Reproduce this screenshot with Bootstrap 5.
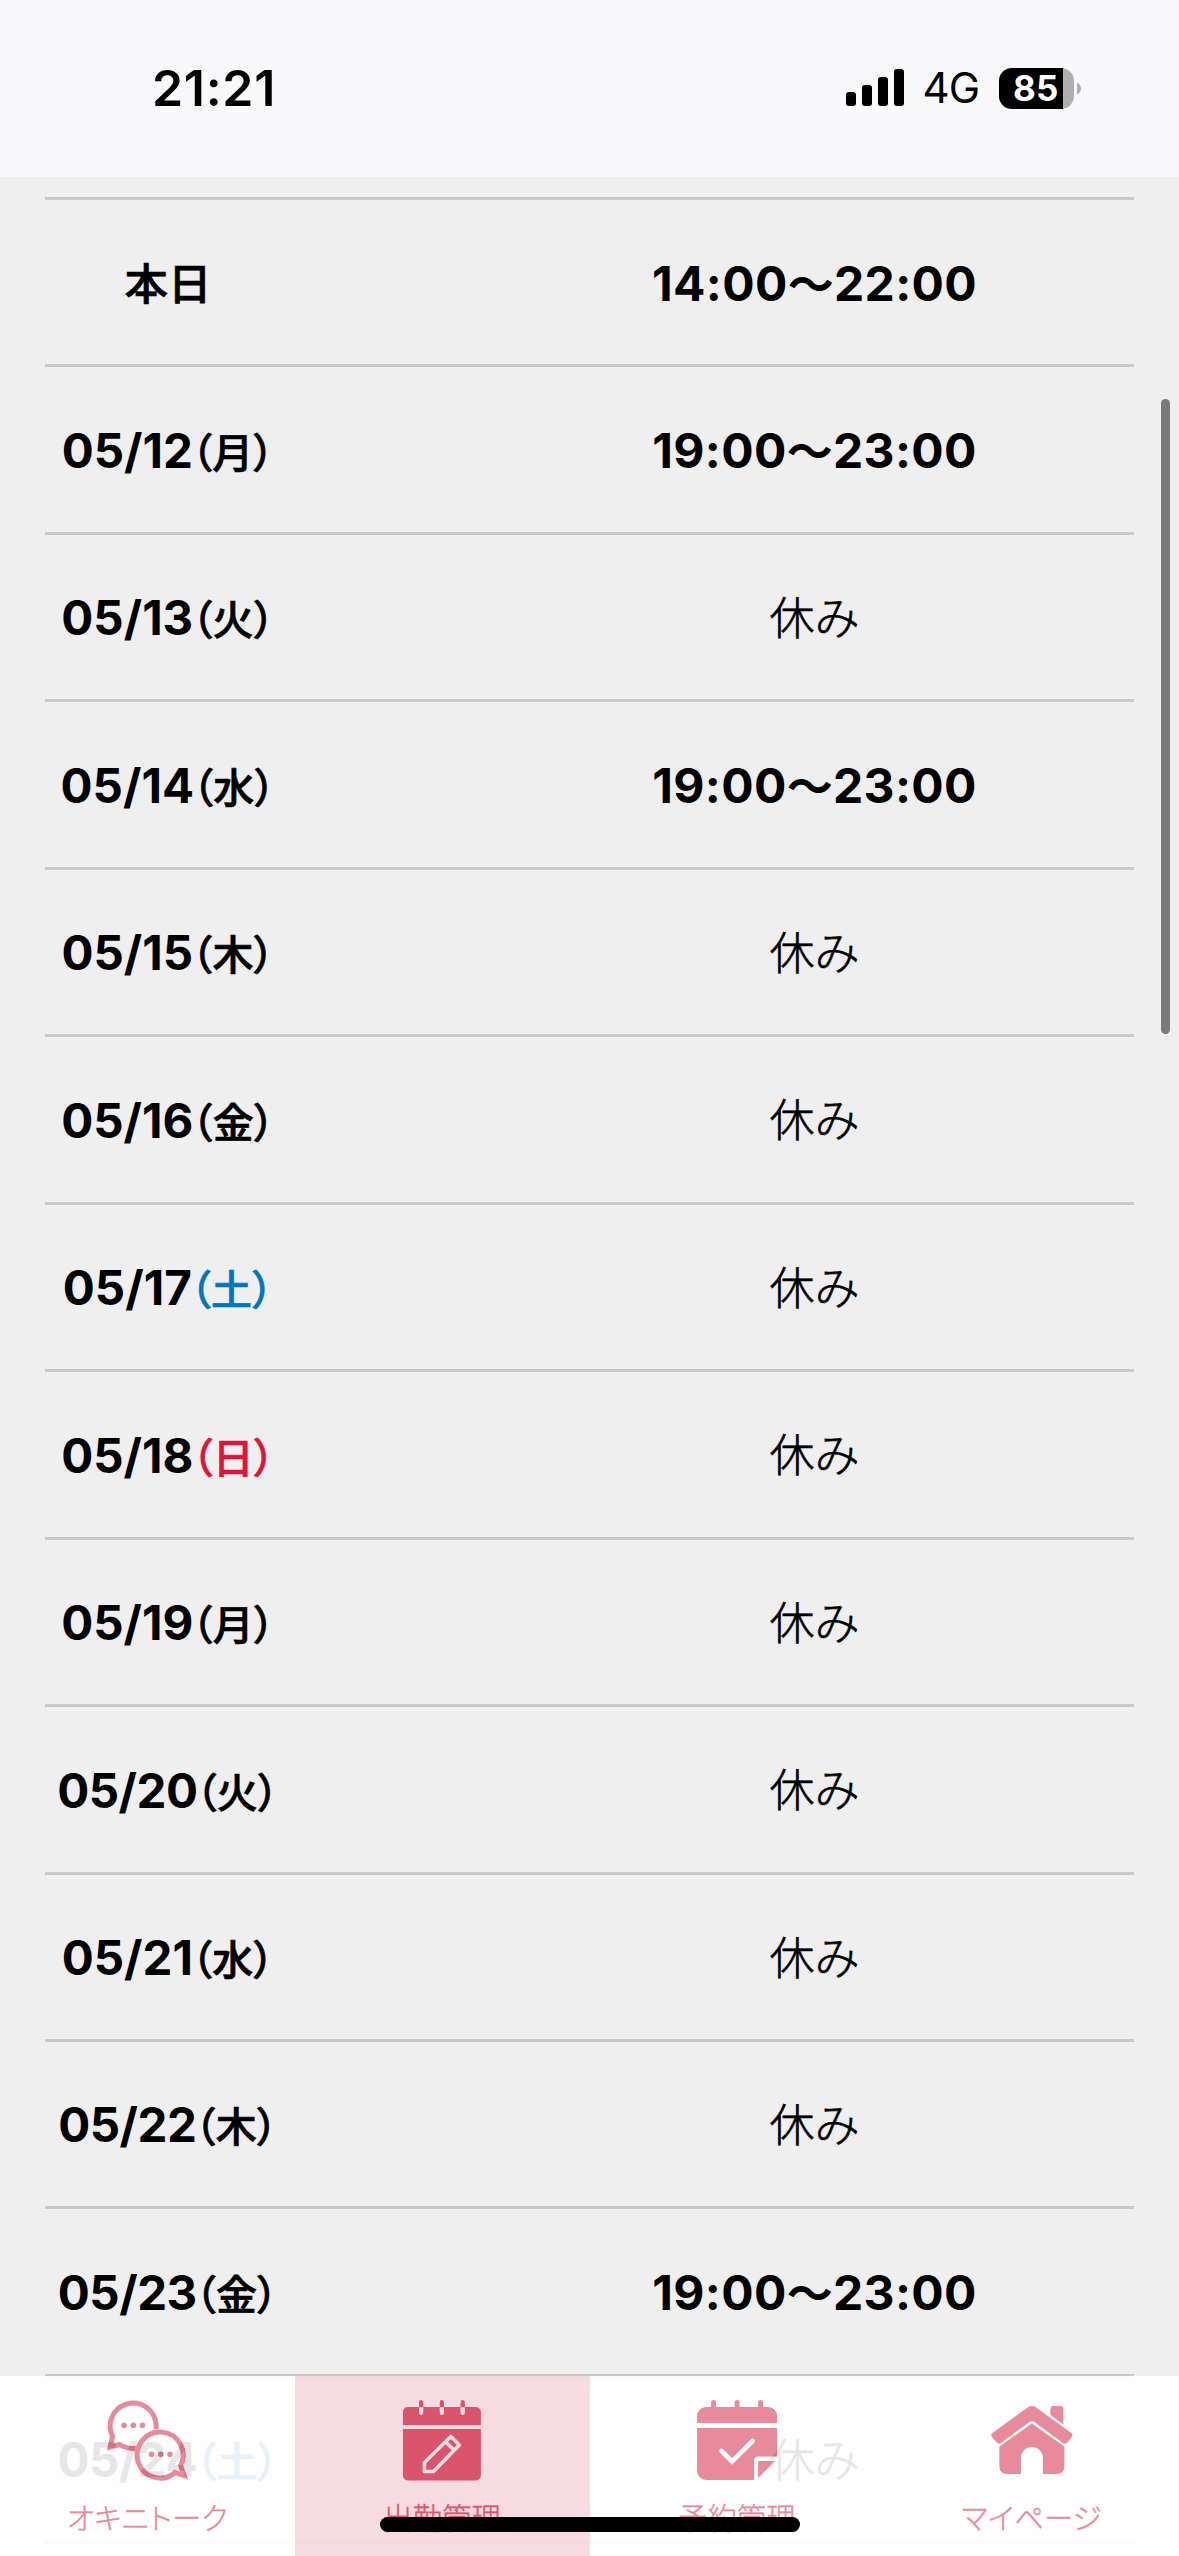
<!DOCTYPE html>
<html lang="ja">
<head>
<meta charset="utf-8">
<meta name="viewport" content="width=device-width, initial-scale=1">
<title>出勤管理</title>
<link href="https://cdn.jsdelivr.net/npm/bootstrap@5.3.0/dist/css/bootstrap.min.css" rel="stylesheet">
<style>
html,body{height:2556px;overflow:hidden}
body{background:#efefef;color:#000;font-family:Inter,"Noto Sans CJK JP",sans-serif;line-height:1}
.statusbar{height:177px;background:#f9f9fc;padding:0 98px 0 152px}
.statusbar>div{height:176px}
.clock{font-size:50px;font-weight:600;letter-spacing:.7px}
.carrier{font-size:42px;letter-spacing:-1px;margin:0 20px 0 18px}
.battery{width:82px;height:41px}
.battery-num{left:14px;top:3px;font-size:35px;font-weight:700;color:#fff;letter-spacing:.2px}
.schedule{height:2359px;padding:0 45px;margin-top:20px}
.shift{height:167.46px;border-top:3px solid #c9c9c9;white-space:nowrap}
.shift-day{width:240px;padding:2px 0 0 6px;font-size:47.5px;font-weight:700}
.shift-day.twenties{letter-spacing:-.5px}
.shift-time{width:641px;padding:1px 0 0 2px;font-size:48px;font-weight:700;letter-spacing:.35px}
.wday{font-family:"Noto Sans CJK JP",sans-serif;font-size:41px;font-weight:500;font-feature-settings:"palt";letter-spacing:.3px;margin-left:-1.5px;-webkit-text-stroke:.7px currentColor}
.today{font-family:"Noto Sans CJK JP",sans-serif;font-size:43.5px;font-weight:500;-webkit-text-stroke:.7px currentColor}
.off{font-family:"Noto Sans CJK JP",sans-serif;font-size:45px;font-weight:300;letter-spacing:0;-webkit-text-stroke:.6px currentColor}
.wave{font-family:"Noto Sans CJK JP",sans-serif;font-size:46px}
.sat{color:#0076be}.sun{color:#df133b}
.last-rule{height:3px;background:#c9c9c9}
.scroll-thumb{right:9px;top:399px;width:9px;height:635px;background:#7a7a7a}
.tabs{height:180px;opacity:.9;background:#fff}
.tab{padding-top:22px;color:#e67f93}
.tab.active{background:#f7d9de;color:#d94360}
.tab svg{width:84px;height:84px;flex:none}
.tab-label{font-family:"Noto Sans CJK JP",sans-serif;font-size:29.3px;font-weight:300;line-height:30px;margin-top:19px;white-space:nowrap;-webkit-text-stroke:.4px currentColor}
.kana{font-feature-settings:"palt";letter-spacing:.3px}
.home-bar{left:380px;bottom:24px;width:420px;height:15px;background:#000;z-index:1040}
</style>
</head>
<body>
<header class="statusbar">
  <div class="d-flex align-items-center justify-content-between">
    <span class="clock">21:21</span>
    <div class="d-flex align-items-center">
      <svg width="59" height="38" viewBox="0 0 59 38"><rect x="0" y="23" width="10" height="14" rx="3"/><rect x="16" y="16" width="10" height="21" rx="3"/><rect x="32" y="8" width="10" height="29" rx="3"/><rect x="48" y="0" width="10" height="37" rx="3"/></svg>
      <span class="carrier">4G</span>
      <div class="battery position-relative">
        <svg class="d-block" width="82" height="41" viewBox="0 0 82 41"><rect width="75" height="41" rx="13" fill="#afafb1"/><path d="M13 0H64V41H13A13 13 0 0 1 0 28V13A13 13 0 0 1 13 0Z"/><path d="M78 14.500q4 2 4 6t-4 6z" fill="#afafb1"/></svg>
        <span class="battery-num position-absolute">85</span>
      </div>
    </div>
  </div>
</header>

<main class="schedule overflow-hidden">
  <div class="shift d-flex align-items-center justify-content-between"><div class="shift-day text-center"><span class="today">本日</span></div><div class="shift-time text-center">14:00<span class="wave">〜</span>22:00</div></div>
  <div class="shift d-flex align-items-center justify-content-between"><div class="shift-day text-center">05/12<span class="wday">（月）</span></div><div class="shift-time text-center">19:00<span class="wave">〜</span>23:00</div></div>
  <div class="shift d-flex align-items-center justify-content-between"><div class="shift-day text-center">05/13<span class="wday">（火）</span></div><div class="shift-time text-center"><span class="off">休み</span></div></div>
  <div class="shift d-flex align-items-center justify-content-between"><div class="shift-day text-center">05/14<span class="wday">（水）</span></div><div class="shift-time text-center">19:00<span class="wave">〜</span>23:00</div></div>
  <div class="shift d-flex align-items-center justify-content-between"><div class="shift-day text-center">05/15<span class="wday">（木）</span></div><div class="shift-time text-center"><span class="off">休み</span></div></div>
  <div class="shift d-flex align-items-center justify-content-between"><div class="shift-day text-center">05/16<span class="wday">（金）</span></div><div class="shift-time text-center"><span class="off">休み</span></div></div>
  <div class="shift d-flex align-items-center justify-content-between"><div class="shift-day text-center">05/17<span class="wday sat">（土）</span></div><div class="shift-time text-center"><span class="off">休み</span></div></div>
  <div class="shift d-flex align-items-center justify-content-between"><div class="shift-day text-center">05/18<span class="wday sun">（日）</span></div><div class="shift-time text-center"><span class="off">休み</span></div></div>
  <div class="shift d-flex align-items-center justify-content-between"><div class="shift-day text-center">05/19<span class="wday">（月）</span></div><div class="shift-time text-center"><span class="off">休み</span></div></div>
  <div class="shift d-flex align-items-center justify-content-between"><div class="shift-day twenties text-center">05/20<span class="wday">（火）</span></div><div class="shift-time text-center"><span class="off">休み</span></div></div>
  <div class="shift d-flex align-items-center justify-content-between"><div class="shift-day text-center">05/21<span class="wday">（水）</span></div><div class="shift-time text-center"><span class="off">休み</span></div></div>
  <div class="shift d-flex align-items-center justify-content-between"><div class="shift-day twenties text-center">05/22<span class="wday">（木）</span></div><div class="shift-time text-center"><span class="off">休み</span></div></div>
  <div class="shift d-flex align-items-center justify-content-between"><div class="shift-day twenties text-center">05/23<span class="wday">（金）</span></div><div class="shift-time text-center">19:00<span class="wave">〜</span>23:00</div></div>
  <div class="shift d-flex align-items-center justify-content-between"><div class="shift-day twenties text-center">05/24<span class="wday sat">（土）</span></div><div class="shift-time text-center"><span class="off">休み</span></div></div>
  <div class="last-rule"></div>
</main>

<div class="scroll-thumb position-fixed rounded-pill"></div>

<nav class="tabs fixed-bottom d-flex">
  <div class="tab col-3 d-flex flex-column align-items-center">
    <svg viewBox="105.4 2398 84 84" fill="none" stroke="currentColor" stroke-width="5">
      <path d="M156.500 2429V2425A23 23 0 1 0 113 2436.500L110.500 2447L120 2444.500Q127 2449 137 2448.500"/>
      <path d="M181 2465.500A23 23 0 1 0 175.500 2472.500L184.500 2475.500Z"/>
      <g fill="currentColor" stroke="none"><circle cx="124.500" cy="2425.300" r="2.800"/><circle cx="133.700" cy="2425.300" r="2.800"/><circle cx="142.900" cy="2425.300" r="2.800"/><circle cx="152" cy="2454.300" r="2.800"/><circle cx="161.200" cy="2454.300" r="2.800"/><circle cx="170.400" cy="2454.300" r="2.800"/></g>
    </svg>
    <span class="tab-label kana">オキニトーク</span>
  </div>
  <div class="tab active col-3 d-flex flex-column align-items-center">
    <svg viewBox="400.100 2398 84 84" fill="currentColor">
      <path d="M403 2425V2412a5 5 0 0 1 5-5H476a5 5 0 0 1 5 5V2425ZM403 2429H481V2475.500a5 5 0 0 1-5 5H408a5 5 0 0 1-5-5Z"/>
      <g stroke-width="4.200" stroke-linecap="round"><path stroke="#f7d9de" d="M421.200 2408V2413M442 2408V2413M462.800 2408V2413"/><path stroke="currentColor" d="M421.200 2402V2405M442 2402V2405M462.800 2402V2405"/></g>
      <path stroke="currentColor" stroke-width="4.200" d="M421.200 2404V2407.500M442 2404V2407.500M462.800 2404V2407.500"/>
      <path stroke="#f7d9de" stroke-width="4.200" d="M421.200 2407.500V2411M442 2407.500V2411M462.800 2407.500V2411"/>
      <path d="M424.500 2471.500V2462.500L451 2436.500L459.500 2445L433.500 2471.500ZM445.500 2441.500L454 2450" fill="none" stroke="#f7d9de" stroke-width="3.600" stroke-linejoin="round"/>
    </svg>
    <span class="tab-label">出勤管理</span>
  </div>
  <div class="tab col-3 d-flex flex-column align-items-center">
    <svg viewBox="694.900 2398 84 84" fill="currentColor">
      <path d="M697 2423V2416a9 9 0 0 1 9-9H768a9 9 0 0 1 9 9V2423ZM697 2428H777V2456.500H758a4 4 0 0 0-4 4V2480H706a9 9 0 0 1-9-9ZM758 2461H775L758 2478Z"/>
      <path d="M713.500 2402.500V2408M737 2402.500V2408M760.500 2402.500V2408" stroke="currentColor" stroke-width="5" stroke-linecap="round"/>
      <path d="M721.500 2451L732 2461.500L752.500 2441" fill="none" stroke="#fff" stroke-width="4.600" stroke-linecap="round"/>
    </svg>
    <span class="tab-label">予約管理</span>
  </div>
  <div class="tab col-3 d-flex flex-column align-items-center">
    <svg viewBox="989.600 2398 84 84" fill="currentColor">
      <path d="M992 2433L1028 2407Q1031.500 2405 1035 2407L1071 2433Q1073 2435 1071.500 2437L1067 2442.500Q1065 2444.500 1062.500 2443L1034 2422Q1031.500 2420 1029 2422L1000.500 2443Q998 2444.500 996.500 2442.500L991.500 2437Q990 2435 992 2433Z"/>
      <path d="M1050 2415V2409Q1050 2406 1053 2406H1060Q1063 2406 1063 2409V2424.500Z"/>
      <path d="M999 2446.500L1031.500 2423.500L1064 2446.500V2466Q1064 2474 1056 2474H1042.500V2458A11 11 0 0 0 1020.500 2458V2474H1007Q999 2474 999 2466Z"/>
    </svg>
    <span class="tab-label kana">マイページ</span>
  </div>
</nav>
<div class="home-bar position-fixed rounded-pill"></div>
<script src="https://cdn.jsdelivr.net/npm/bootstrap@5.3.0/dist/js/bootstrap.bundle.min.js"></script>
</body>
</html>
